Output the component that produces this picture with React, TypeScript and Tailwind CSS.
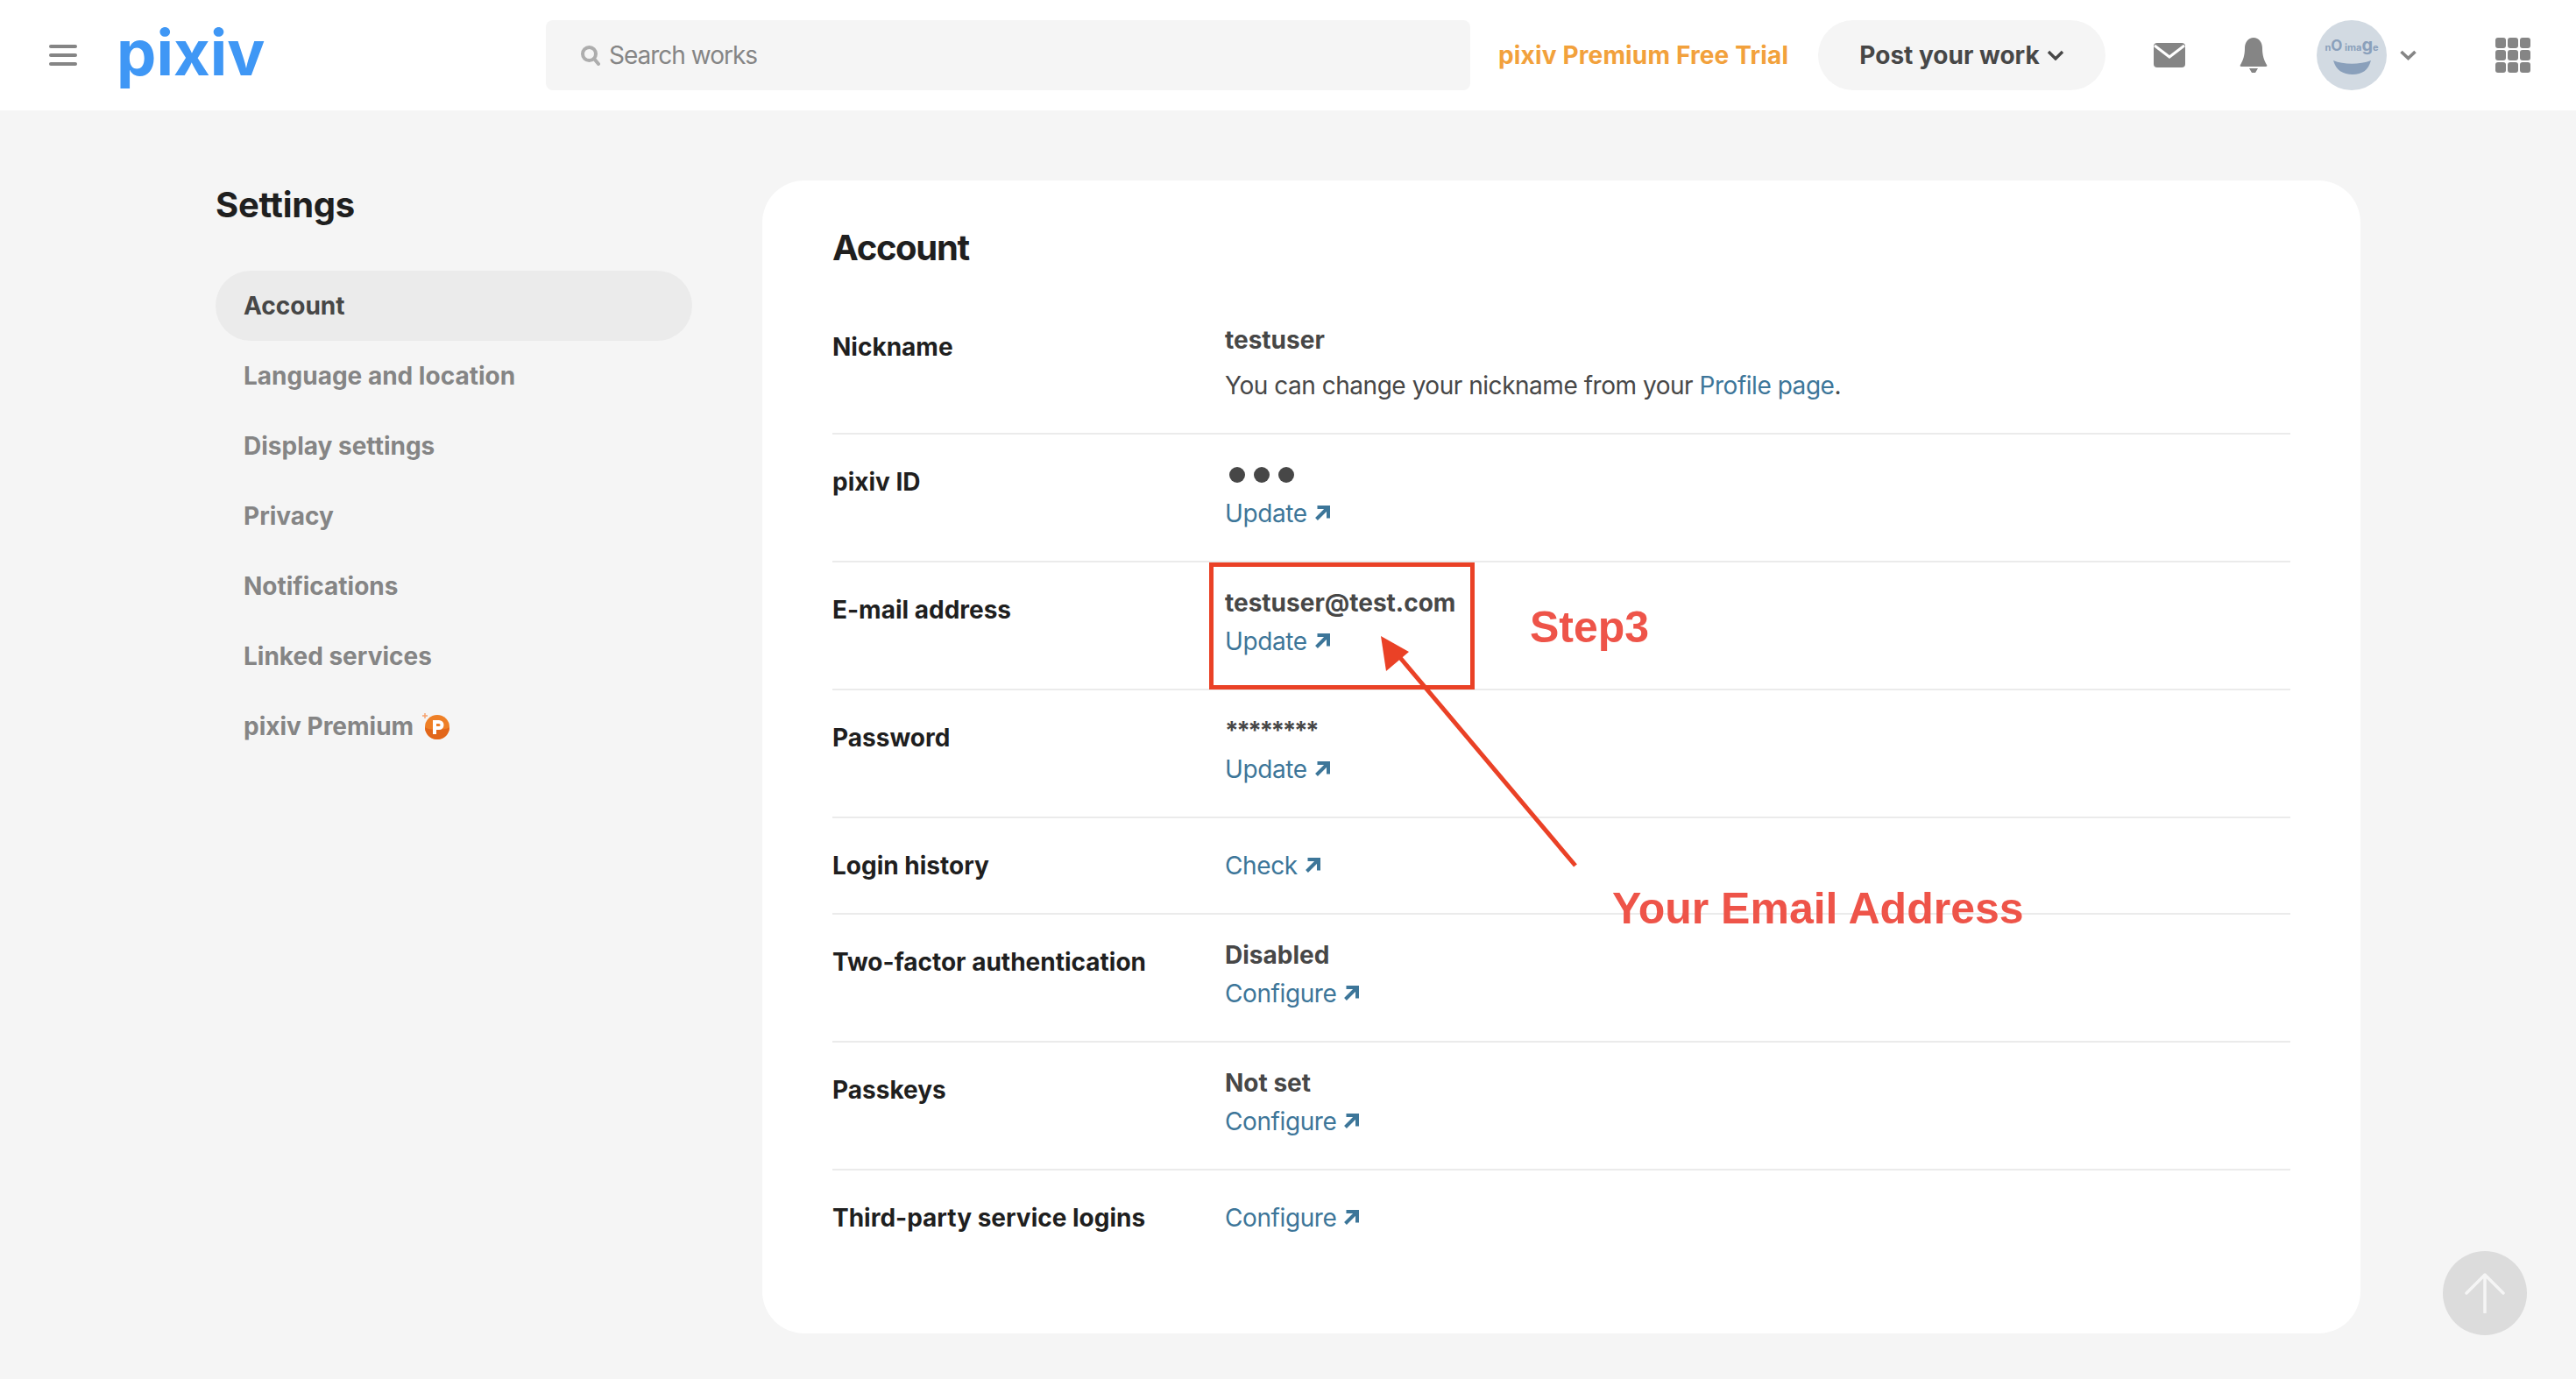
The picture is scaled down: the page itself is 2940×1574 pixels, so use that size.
import React from 'react';

const UpRight = () => (
  <svg className="w-[18px] h-[18px] ml-[8px]" viewBox="0 0 18 18" fill="none">
    <path d="M3.500 2h12.500V14.500M15 3L2.500 15.500" stroke="#3d7699" strokeWidth="4" />
  </svg>
);

const ActionLink = ({ label }: { label: string }) => (
  <a className="flex items-center h-[44px] w-fit tracking-[-0.4px] text-[#3d7699]">
    {label}
    <UpRight />
  </a>
);

const Row = ({ label, children, last, single }: { label: string; children: React.ReactNode; last?: boolean; single?: boolean }) => (
  <div className={`flex pt-6 pb-8 ${last ? '' : 'border-b-2 border-[#ebebeb]'}`}>
    <div className="w-[448px] pt-2 leading-[44px] font-bold text-[#1f1f1f]">{label}</div>
    <div className={single ? 'pt-2' : ''}>{children}</div>
  </div>
);

const Value = ({ children }: { children: React.ReactNode }) => (
  <div className="h-[44px] leading-[44px] font-bold text-[#474747]">{children}</div>
);

const navItems = ['Language and location', 'Display settings', 'Privacy', 'Notifications', 'Linked services'];

const Header = () => (
  <header className="flex items-center h-[126px] bg-white shrink-0">
    <div className="flex flex-col gap-[6px] w-8 ml-14">
      <span className="h-1 rounded bg-[#858585]" />
      <span className="h-1 rounded bg-[#858585]" />
      <span className="h-1 rounded bg-[#858585]" />
    </div>
    <div className="ml-[45px] w-[490px] text-[72px] leading-none font-bold tracking-[0px] text-[#3f97f5] -mt-[6px]">pixiv</div>
    <div className="flex items-center w-[1055px] h-20 pl-[39px] rounded-lg bg-[#f5f5f5] tracking-[-1px] text-[#858585]">
      <svg className="w-[24px] h-[24px] mr-[9px]" viewBox="0 0 24 24" fill="none">
        <circle cx="10.500" cy="10.500" r="7.500" stroke="#adadad" strokeWidth="4" />
        <path d="M16 16l5 6" stroke="#adadad" strokeWidth="4" strokeLinecap="round" />
      </svg>
      Search works
    </div>
    <a className="ml-8 w-[365px] font-bold tracking-[0.15px] text-[#f2a13c] whitespace-nowrap">pixiv Premium Free Trial</a>
    <button className="flex items-center justify-center gap-[8px] w-[328px] h-20 rounded-full bg-[#f5f5f5] font-bold text-[#474747]">
      Post your work
      <svg className="w-5 h-3" viewBox="0 0 20 12" fill="none">
        <path d="M2 2l8 8 8-8" stroke="#474747" strokeWidth="3.400" />
      </svg>
    </button>
    <svg className="ml-[55px] w-[36px] h-[28px]" viewBox="0 0 36 28">
      <rect width="36" height="28" rx="4" fill="#858585" />
      <path d="M1 3l17 13L35 3" fill="none" stroke="#fff" strokeWidth="3" />
    </svg>
    <svg className="ml-[62px] w-[32px] h-[40px]" viewBox="0 0 32 40" fill="#858585">
      <path d="M16 0c6 0 10 5 10 12 0 8 2 14 5 19 1 1 0 2-1 2H2c-1 0-2-1-1-2 3-5 5-11 5-19C6 5 10 0 16 0z" />
      <path d="M11 35h10l-3 5h-4z" />
    </svg>
    <svg className="ml-[56px] w-20 h-20" viewBox="0 0 80 80">
      <circle cx="40" cy="40" r="40" fill="#d2dae2" />
      <text x="40" y="35" textAnchor="middle" fontFamily="Inter, sans-serif" fontSize="11" fontWeight="700" fill="#8aa0bb">
        n<tspan fontSize="17">O</tspan> ima
        <tspan fontSize="20">g</tspan>e
      </text>
      <path d="M19 46c12 5 30 5 43 0-3 11-10 16-21 16S22 57 19 46z" fill="#8aa0bb" />
    </svg>
    <svg className="ml-[15px] w-[19px] h-3" viewBox="0 0 19 12" fill="none">
      <path d="M1.500 2l8 7.500 8-7.500" stroke="#858585" strokeWidth="3.600" />
    </svg>
    <div className="ml-[90px] grid grid-cols-3 gap-[2px] w-10 h-10">
      {Array.from({ length: 9 }).map((_, i) => (
        <span key={i} className="rounded-[3px] bg-[#858585]" />
      ))}
    </div>
  </header>
);

const Sidebar = () => (
  <aside className="w-[544px] shrink-0">
    <h1 className="h-14 mb-[47px] text-[40px] leading-[56px] font-bold tracking-[-0.3px] text-[#1f1f1f]">Settings</h1>
    <a className="flex items-center h-20 pl-8 rounded-full bg-[#ebebeb] font-bold text-[#474747]">Account</a>
    {navItems.map((item) => (
      <a key={item} className="flex items-center h-20 pl-8 font-bold text-[#858585]">
        {item}
      </a>
    ))}
    <a className="flex items-center h-20 pl-8 font-bold text-[#858585]">
      pixiv Premium
      <svg className="ml-[10px] w-[32px] h-[32px]" viewBox="0 0 32 32">
        <path d="M3 1v6M0 4h6" stroke="#f6a06a" strokeWidth="1.400" />
        <circle cx="17" cy="17" r="14" fill="#ee7f26" />
        <path d="M3 17a14 14 0 0 0 28 0c-4 4-24 4-28 0z" fill="#e2661a" />
        <path d="M12 25V9h7a5 5 0 0 1 0 11h-3v5z" fill="#fff" />
        <path d="M16 13v3h3a1.500 1.500 0 0 0 0-3z" fill="#ee7f26" />
      </svg>
    </a>
  </aside>
);

const Annotations = () => (
  <>
    <div className="absolute left-[1380px] top-[642px] w-[303px] h-[145px] border-[5px] border-[#ea4126]" />
    <div className="absolute left-[1746px] top-[686px] text-[50px] leading-[60px] font-bold text-[#ee5449] font-['Liberation_Sans',sans-serif]">Step3</div>
    <div className="absolute left-[1840px] top-[1007px] text-[50px] leading-[60px] font-bold text-[#ee5449] whitespace-nowrap font-['Liberation_Sans',sans-serif]">Your Email Address</div>
    <svg className="absolute left-[1560px] top-[720px] w-[250px] h-[280px]" viewBox="0 0 250 280" fill="none">
      <path d="M238 268L29 20" stroke="#ea4126" strokeWidth="5" />
      <path d="M16 6l6 40 26-22z" fill="#ea4126" />
    </svg>
  </>
);

export default function App() {
  return (
    <div className="relative flex flex-col min-h-[1574px] bg-[#f5f5f5] text-[28px] font-['Inter',sans-serif]">
      <Header />
      <main className="flex gap-20 pl-[246px] pt-20">
        <Sidebar />
        <section className="w-[1824px] pt-[49px] px-20 pb-[78px] rounded-[48px] bg-white">
          <h2 className="h-14 mb-[31px] text-[40px] leading-[56px] font-bold tracking-[-1.300px] text-[#1f1f1f]">Account</h2>
          <Row label="Nickname">
            <Value>testuser</Value>
            <div className="mt-2 h-[44px] leading-[44px] tracking-[-0.47px] text-[#474747]">
              You can change your nickname from your <a className="text-[#3d7699]">Profile page</a>.
            </div>
          </Row>
          <Row label="pixiv ID">
            <div className="flex items-center gap-[10px] h-[44px] pl-[5px]">
              <span className="w-[18px] h-[18px] rounded-full bg-[#474747]" />
              <span className="w-[18px] h-[18px] rounded-full bg-[#474747]" />
              <span className="w-[18px] h-[18px] rounded-full bg-[#474747]" />
            </div>
            <ActionLink label="Update" />
          </Row>
          <Row label="E-mail address">
            <Value>testuser@test.com</Value>
            <ActionLink label="Update" />
          </Row>
          <Row label="Password">
            <div className="h-[44px] leading-[44px] font-bold tracking-[-2.500px] text-[#474747]">********</div>
            <ActionLink label="Update" />
          </Row>
          <Row label="Login history" single>
            <ActionLink label="Check" />
          </Row>
          <Row label="Two-factor authentication">
            <Value>Disabled</Value>
            <ActionLink label="Configure" />
          </Row>
          <Row label="Passkeys">
            <Value>Not set</Value>
            <ActionLink label="Configure" />
          </Row>
          <Row label="Third-party service logins" single last>
            <ActionLink label="Configure" />
          </Row>
        </section>
      </main>
      <Annotations />
      <button className="absolute left-[2788px] top-[1428px] flex items-center justify-center w-24 h-24 rounded-full bg-[#dcdcdc]">
        <svg className="w-[46px] h-[46px]" viewBox="0 0 46 46" fill="none">
          <path d="M23 45V2M2 23L23 2l21 21" stroke="#f5f5f5" strokeWidth="3.500" strokeLinecap="round" strokeLinejoin="round" />
        </svg>
      </button>
    </div>
  );
}
